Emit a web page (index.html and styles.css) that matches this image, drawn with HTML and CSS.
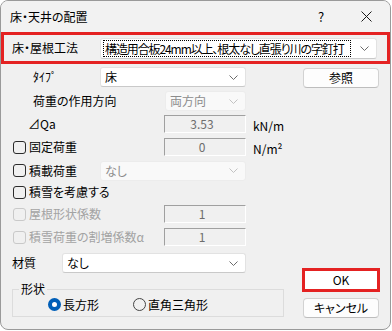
FILE: index.html
```html
<!DOCTYPE html>
<html lang="ja">
<head>
    <meta charset="UTF-8">
    <meta name="viewport" content="width=device-width, initial-scale=1.0">
    <title>床・天井の配置</title>
    <link rel="stylesheet" href="styles.css">
</head>
<body>
    <div class="window">
        <div class="titlebar">
            <span class="title">床・天井の配置</span>
            <span class="help">?</span>
            <span class="close">
                <svg width="11" height="11" viewBox="0 0 11 11"><path d="M0.5 0.5 L10.5 10.5 M10.5 0.5 L0.5 10.5" stroke="#1a1a1a" stroke-width="1" fill="none"/></svg>
            </span>
        </div>

        <div class="method">
            <span class="method-label">床・屋根工法</span>
            <div class="combo combo-main">
                <span class="focus">構造用合板24mm以上、根太なし直張り川の字釘打</span>
                <svg class="chev" width="9" height="5" viewBox="0 0 9 5"><path d="M0.5 0.5 L4.5 4.5 L8.5 0.5" stroke="#6b6b6b" fill="none"/></svg>
            </div>
        </div>

        <div class="content">
            <div class="form">
                <div class="row h20">
                    <span class="name indent">ﾀｲﾌﾟ</span>
                    <div class="combo w-mid">
                        <span class="val">床</span>
                        <svg class="chev" width="9" height="5" viewBox="0 0 9 5"><path d="M0.5 0.5 L4.5 4.5 L8.5 0.5" stroke="#6b6b6b" fill="none"/></svg>
                    </div>
                </div>
                <div class="row h20">
                    <span class="name wide indent">荷重の作用方向</span>
                    <div class="combo disabled w-small">
                        <span class="val">両方向</span>
                        <svg class="chev" width="9" height="5" viewBox="0 0 9 5"><path d="M0.5 0.5 L4.5 4.5 L8.5 0.5" stroke="#c2c2c2" fill="none"/></svg>
                    </div>
                </div>
                <div class="row h18">
                    <span class="name wide indent-sm">⊿Qa</span>
                    <div class="edit">3.53</div>
                    <span class="unit">kN/m</span>
                </div>
                <div class="row h18">
                    <span class="name wide"><i class="check"></i>固定荷重</span>
                    <div class="edit">0</div>
                    <span class="unit">N/m²</span>
                </div>
                <div class="row h19">
                    <span class="name"><i class="check"></i>積載荷重</span>
                    <div class="combo disabled w-mid">
                        <span class="val">なし</span>
                        <svg class="chev" width="9" height="5" viewBox="0 0 9 5"><path d="M0.5 0.5 L4.5 4.5 L8.5 0.5" stroke="#c2c2c2" fill="none"/></svg>
                    </div>
                </div>
                <div class="row h16">
                    <span class="name"><i class="check"></i>積雪を考慮する</span>
                </div>
                <div class="row h18 off">
                    <span class="name wide"><i class="check"></i>屋根形状係数</span>
                    <div class="edit">1</div>
                </div>
                <div class="row h18 off">
                    <span class="name wide"><i class="check"></i>積雪荷重の割増係数α</span>
                    <div class="edit">1</div>
                </div>
                <div class="row h20">
                    <span class="name narrow">材質</span>
                    <div class="combo w-large">
                        <span class="val">なし</span>
                        <svg class="chev" width="9" height="5" viewBox="0 0 9 5"><path d="M0.5 0.5 L4.5 4.5 L8.5 0.5" stroke="#6b6b6b" fill="none"/></svg>
                    </div>
                </div>
                <fieldset class="group">
                    <legend>形状</legend>
                    <div class="radios">
                        <span class="radio-item first"><i class="radio on"></i>長方形</span>
                        <span class="radio-item"><i class="radio"></i>直角三角形</span>
                    </div>
                </fieldset>
            </div>

            <div class="side">
                <button class="btn">参照</button>
                <div class="side-bottom">
                    <div class="ok-frame"><button class="btn btn-ok">OK</button></div>
                    <button class="btn">キャンセル</button>
                </div>
            </div>
        </div>
    </div>
</body>
</html>
```

FILE: styles.css
```css
html, body {
    margin: 0;
    background: #ffffff;
}
body {
    font-family: "Noto Sans CJK JP", "Noto Sans", sans-serif;
    font-size: 12px;
    line-height: 16px;
    color: #000;
    font-feature-settings: "palt";
}
.window {
    width: 391px;
    height: 330px;
    box-sizing: border-box;
    border: 1px solid #9a9a9a;
    border-radius: 8px;
    background: #f0f0f0;
    overflow: hidden;
}
.titlebar {
    height: 31px;
    display: flex;
    align-items: center;
    background: #f2f2f2;
}
.title {
    margin-left: 9px;
    flex: 1;
}
.help {
    width: 12px;
    margin-right: 31px;
    font-size: 13px;
}
.close {
    width: 11px;
    height: 11px;
    margin-right: 18px;
    display: flex;
}

/* red framed method row */
.method {
    height: 32px;
    box-sizing: border-box;
    border: 3px solid #e42222;
    display: flex;
    align-items: flex-start;
    padding: 3px 0 0 8px;
}
.method-label {
    width: 88px;
    line-height: 20px;
}
.combo {
    height: 20px;
    box-sizing: border-box;
    background: #fff;
    border: 1px solid #e2e2e2;
    border-bottom-color: #c9c9c9;
    border-radius: 3px;
    display: flex;
    align-items: center;
    padding: 0 7px 0 4px;
    overflow: hidden;
}
.combo .val {
    flex: 1;
    white-space: nowrap;
}
.combo .chev {
    flex: none;
    margin-left: 4px;
}
.combo-main {
    width: 277px;
    height: 21px;
    padding-left: 2px;
}
.combo-main .focus {
    flex: 1;
    white-space: nowrap;
    border: 1px dotted #000;
    line-height: 15px;
    padding-left: 1px;
    margin-right: 5px;
    letter-spacing: -1.1px;
}
.combo.disabled {
    background: #f9f9f9;
    border-color: #ececec;
    color: #8c8c8c;
}
.w-mid { width: 146px; }
.w-small { width: 81px; margin-left: 1px; }
.w-large { width: 184px; }

/* body */
.content {
    display: flex;
    padding: 3px 11px 0 11px;
}
.form {
    width: 235px;
    display: grid;
    grid-template-rows: 24px 24px 23px 23px 23px 21px 23px 25px 26px auto;
    align-items: start;
}
.row {
    display: flex;
    align-items: center;
    white-space: nowrap;
}
.h20 { height: 20px; }
.h19 { height: 19px; }
.h18 { height: 18px; }
.h16 { height: 16px; }
.name {
    width: 88px;
    flex: none;
    display: flex;
    align-items: center;
}
.name.wide { width: 152px; }
.name.narrow { width: 50px; }
.indent { padding-left: 21px; box-sizing: border-box; }
.indent-sm { padding-left: 16px; box-sizing: border-box; }
.check {
    width: 13px;
    height: 13px;
    box-sizing: border-box;
    border: 1px solid #2b2b2b;
    border-radius: 3px;
    margin: 0 3px 0 1px;
    flex: none;
}
.off { color: #a3a3a3; }
.off .check { border-color: #c9c9c9; }
.edit {
    width: 82px;
    height: 18px;
    box-sizing: border-box;
    border-top: 1px solid #a0a0a0;
    border-left: 1px solid #a0a0a0;
    border-right: 1px solid #ffffff;
    border-bottom: 1px solid #ffffff;
    text-align: center;
    color: #6d6d6d;
    line-height: 15px;
    padding-right: 6px;
}
.unit {
    margin-left: 7px;
    margin-top: 4px;
}

.group {
    margin: 2px 0 0 0;
    padding: 0 0 4px 6px;
    border: 1px solid #dcdcdc;
    min-width: 0;
}
.group legend {
    padding: 0 2px;
    line-height: 16px;
}
.radios {
    display: flex;
    height: 15px;
    align-items: center;
    padding-left: 29px;
}
.radio-item {
    display: flex;
    align-items: center;
}
.radio-item.first { width: 85px; }
.radio {
    width: 13px;
    height: 13px;
    box-sizing: border-box;
    border: 1px solid #444;
    border-radius: 50%;
    margin-right: 2px;
}
.radio.on {
    border: 4px solid #005fb8;
    background: #fff;
}

/* right column */
.side {
    width: 76px;
    margin-left: auto;
    display: flex;
    flex-direction: column;
    justify-content: space-between;
}
.btn {
    width: 76px;
    height: 20px;
    box-sizing: border-box;
    background: #fdfdfd;
    border: 1px solid #d2d2d2;
    border-bottom-color: #bdbdbd;
    border-radius: 4px;
    font: inherit;
    color: #000;
    padding: 0;
    margin-top: 1px;
}
.side-bottom {
    display: flex;
    flex-direction: column;
    gap: 5px;
    margin-bottom: -1px;
}
.ok-frame {
    width: 78px;
    height: 24px;
    box-sizing: border-box;
    margin-left: -1px;
    border: 3px solid #e42222;
}
.btn-ok {
    width: 72px;
    height: 18px;
    margin: 0;
    border: none;
    border-radius: 0;
    background: #fff;
}
```
